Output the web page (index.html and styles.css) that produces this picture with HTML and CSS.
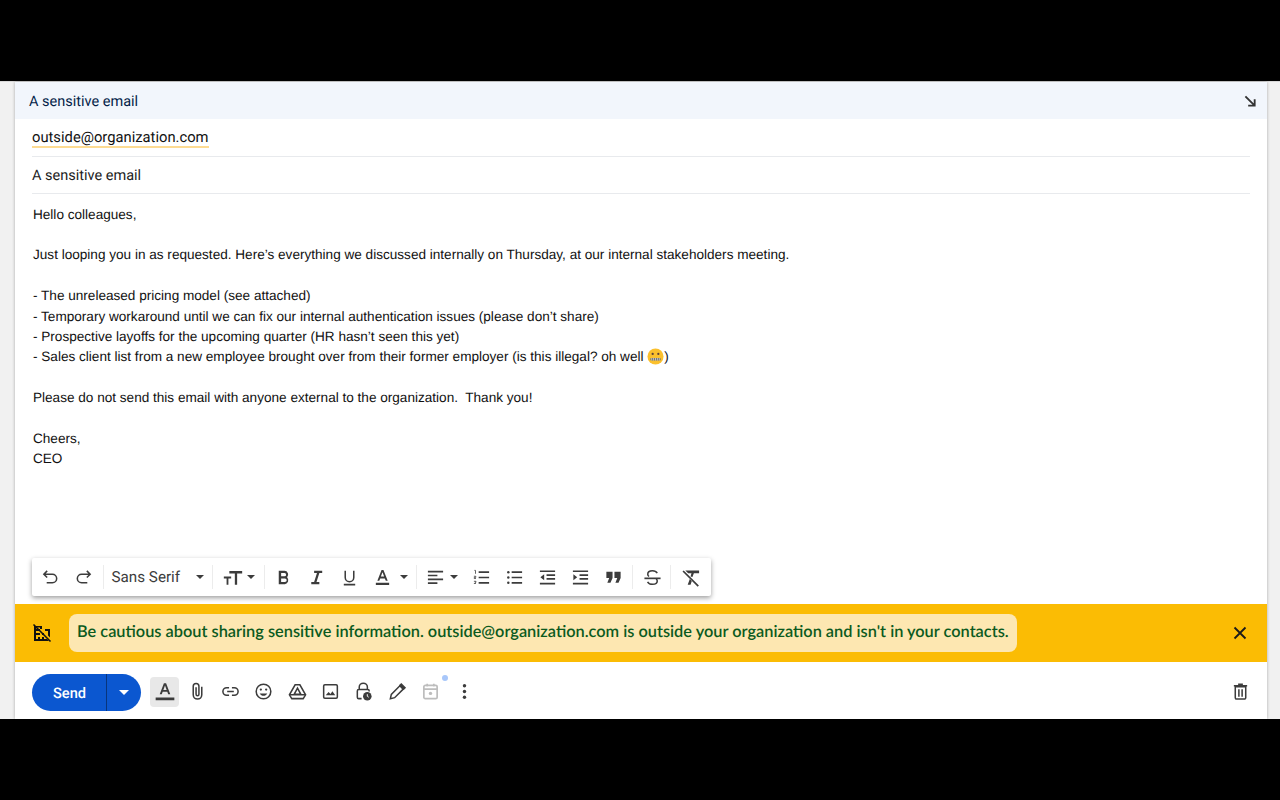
FILE: index.html
```html
<!DOCTYPE html>
<html lang="en">
<head>
<meta charset="utf-8">
<title>A sensitive email</title>
<link rel="stylesheet" href="styles.css">
</head>
<body>
<div class="bar-black"></div>
<main class="stage">
  <section class="compose">
    <header class="head">
      <span class="head-title">A sensitive email</span>
      <svg class="ic-exit" viewBox="0 0 14 14"><path d="M1.500 1.500 11 11M11.500 4.500v7h-7" fill="none" stroke="#333" stroke-width="2"/></svg>
    </header>
    <div class="field field-to"><span class="chip">outside@organization.com</span></div>
    <div class="field field-subject">A sensitive email</div>
    <div class="body">
      <p>Hello colleagues,</p>
      <p>Just looping you in as requested. Here’s everything we discussed internally on Thursday, at our internal stakeholders meeting.</p>
      <p>- The unreleased pricing model (see attached)<br>
      - Temporary workaround until we can fix our internal authentication issues (please don’t share)<br>
      - Prospective layoffs for the upcoming quarter (HR hasn’t seen this yet)<br>
      - Sales client list from a new employee brought over from their former employer (is this illegal? oh well <svg class="emoji" viewBox="0 0 18 18"><circle cx="9" cy="9" r="8.500" fill="#fbc02d"/><circle cx="6" cy="6.300" r="1.200" fill="#5d4037"/><circle cx="12" cy="6.300" r="1.200" fill="#5d4037"/><rect x="3.500" y="10.500" width="11" height="2.800" rx="1" fill="#6d6d6d"/><path d="M5 10.500v2.800M7 10.500v2.800M9 10.500v2.800M11 10.500v2.800M13 10.500v2.800" stroke="#ddd" stroke-width=".8"/></svg>)</p>
      <p>Please do not send this email with anyone external to the organization.&nbsp; Thank you!</p>
      <p>Cheers,<br>CEO</p>
    </div>
    <div class="format-wrap">
      <div class="format">
        <span class="fbtn w33"><svg viewBox="0 0 20 20"><path d="M6.500 3 3 6.500 6.500 10M3.500 6.500H12a4.500 4.500 0 0 1 0 9H6" class="st"/></svg></span>
        <span class="fbtn w33"><svg viewBox="0 0 20 20"><path d="M13.500 3 17 6.500 13.500 10M16.500 6.500H8a4.500 4.500 0 0 0 0 9h6" class="st"/></svg></span>
        <span class="sep s-a"></span>
        <span class="fontname">Sans Serif</span><span class="caret c-font"></span>
        <span class="sep s-b"></span>
        <span class="fbtn w-size"><svg viewBox="0 0 24 20"><path d="M2 9h8v2H7v7H5v-7H2zM8 3h14v2.500h-5.500V18H14V5.500H8z" class="fl"/></svg></span><span class="caret c-size"></span>
        <span class="sep s-c"></span>
        <span class="fbtn w33"><svg viewBox="0 0 20 20"><path d="M5 3h6a4 4 0 0 1 2.800 6.800A4.300 4.300 0 0 1 11.500 17H5zm2.500 2.300v3.500H11a1.750 1.750 0 0 0 0-3.500zm0 5.700v3.700H11.500a1.850 1.850 0 0 0 0-3.700z" class="fl" fill-rule="evenodd"/></svg></span>
        <span class="fbtn w33"><svg viewBox="0 0 20 20"><path d="M7.500 3H16v2.300h-3L10 14.700h3V17H4.500v-2.300h3l3-9.400h-3z" class="fl"/></svg></span>
        <span class="fbtn w33"><svg viewBox="0 0 20 20"><path d="M5.500 3v7a4.500 4.500 0 0 0 9 0V3M4 17.500h12" class="st"/></svg></span>
        <span class="fbtn w-color"><svg viewBox="0 0 20 20"><path d="M9 2h2l4.500 11.500h-2L12.400 11H7.600l-1 2.500h-2zm-.700 7h3.400L10 4.500zM3 15.500h14V18H3z" class="fl" fill-rule="evenodd"/></svg></span><span class="caret c-color"></span>
        <span class="sep s-d"></span>
        <span class="fbtn w-align"><svg viewBox="0 0 20 20"><path d="M2 3h16v1.800H2zM2 7h10v1.800H2zM2 11h16v1.800H2zM2 15h10v1.800H2z" class="fl"/></svg></span><span class="caret c-align"></span>
        <span class="fbtn w-ol"><svg viewBox="0 0 20 20"><path d="M7 3.500h11v1.800H7zM7 9.100h11v1.800H7zM7 14.700h11v1.800H7z" class="fl"/><path d="M2.500 2.500h1.200v3.600M2 8.700h2v1.200H2.400v1.200h1.800M2 14h2.200v1.100H3m-1 1.200h2.200" fill="none" stroke="#333" stroke-width=".8"/></svg></span>
        <span class="fbtn w33"><svg viewBox="0 0 20 20"><circle cx="3.500" cy="4.400" r="1.300" class="fl"/><circle cx="3.500" cy="10" r="1.300" class="fl"/><circle cx="3.500" cy="15.600" r="1.300" class="fl"/><path d="M7 3.500h11v1.800H7zM7 9.100h11v1.800H7zM7 14.700h11v1.800H7z" class="fl"/></svg></span>
        <span class="fbtn w33"><svg viewBox="0 0 20 20"><path d="M2 2.500h16v1.800H2zM9 6.500h9v1.800H9zM9 10.500h9v1.800H9zM2 15.500h16v1.800H2zM6.500 6.500v6.500L2.500 9.800z" class="fl"/></svg></span>
        <span class="fbtn w33"><svg viewBox="0 0 20 20"><path d="M2 2.500h16v1.800H2zM9 6.500h9v1.800H9zM9 10.500h9v1.800H9zM2 15.500h16v1.800H2zM2.500 6.500v6.500l4-3.200z" class="fl"/></svg></span>
        <span class="fbtn w-quote"><svg viewBox="0 0 20 20"><path d="M2.500 4h6.500v6.500L6.800 15.500H3.500l2-5H2.500zM11 4h6.500v6.500l-2.200 5h-3.300l2-5H11z" class="fl"/></svg></span>
        <span class="sep s-e"></span>
        <span class="fbtn w-strike"><svg viewBox="0 0 20 20"><path d="M15 5.500C14 3.800 12 3 10 3 7.300 3 5 4.300 5 6.500c0 1 .5 1.800 1.300 2.500M13.800 11.500c.8.600 1.200 1.300 1.200 2.200 0 2.200-2.300 3.500-5 3.500-2.300 0-4.200-1-5.200-2.700" class="st"/><path d="M1.500 10h17v1.800h-17z" class="fl"/></svg></span>
        <span class="sep s-f"></span>
        <span class="fbtn w-clear"><svg viewBox="0 0 20 20"><path d="M3.500 2.500H18v3h-5.500L11 9.500 9 9l1-3.500H6.500zM8.300 11.300 6 17.500h3l1.500-4.300zM1.800 2.500l16 16-1.300 1.300-16-16z" class="fl"/></svg></span>
      </div>
    </div>
    <div class="warn">
      <svg class="ic-domain" viewBox="0 0 20 20"><path d="M2 3V18h15l-2-2H4v-2h2v2h2v-2H6v-2h2V10H6V8h2V6H6V4.500h2V6h2V3zM4 4.500h2V6H4zM4 8h2v2H4zm0 4h2v2H4zM10 6h8v8.500l-2-2V8h-3V6zM10 10h2v2h-2zM10 14h2v2h-2z" fill="#111" fill-rule="evenodd"/><path d="M1.500 1.500 18.500 18.500" stroke="#111" stroke-width="1.600"/></svg>
      <div class="warn-pill">Be cautious about sharing sensitive information. outside@organization.com is outside your organization and isn't in your contacts.</div>
      <svg class="ic-close" viewBox="0 0 14 14"><path d="M1.500 1.500l11 11M12.500 1.500l-11 11" stroke="#1a1a1a" stroke-width="1.800" fill="none"/></svg>
    </div>
    <footer class="foot">
      <div class="send"><span class="send-main">Send</span><span class="send-more"><i class="caret-w"></i></span></div>
      <span class="tool tool-a"><svg viewBox="0 0 20 20"><path d="M9 2h2l3.800 10h-1.900l-.8-2.200H7.900L7.100 12H5.200zm-.5 6.200h3L10 4z" class="fl" fill-rule="evenodd"/><path d="M1.500 15h17v2.500h-17z" class="fl"/></svg></span>
      <span class="tool t-attach"><svg viewBox="0 0 20 20"><path d="M14.500 5.500V14a4.500 4.500 0 0 1-9 0V5a3 3 0 0 1 6 0v8.500a1.500 1.500 0 0 1-3 0V6" class="st" transform="translate(0 -.5)"/></svg></span>
      <span class="tool t-next"><svg viewBox="0 0 20 20"><path d="M8.500 6H6a4 4 0 0 0 0 8h2.500M11.500 6H14a4 4 0 0 1 0 8h-2.500M6.500 10h7" class="st"/></svg></span>
      <span class="tool t-next"><svg viewBox="0 0 20 20"><circle cx="10" cy="10" r="7.700" class="st"/><circle cx="7.200" cy="8" r="1.200" class="fl"/><circle cx="12.800" cy="8" r="1.200" class="fl"/><path d="M6 12c1 1.700 2.400 2.400 4 2.400s3-.7 4-2.400z" class="fl"/></svg></span>
      <span class="tool t-next"><svg viewBox="0 0 20 20"><path d="M7.500 3h5l6 10.500-2.500 4H4l-2.500-4z" class="st"/><path d="M10 6.500 6.500 13h7zM2 13.500h16" class="st"/></svg></span>
      <span class="tool t-next"><svg viewBox="0 0 20 20"><rect x="2.800" y="2.800" width="14.400" height="14.400" rx="1.300" class="st"/><path d="M5 14l3-3.500 2 2 2-2.800L15 14z" class="fl"/></svg></span>
      <span class="tool t-next"><svg viewBox="0 0 20 20"><path d="M5.500 8V5.500a4.300 4.300 0 0 1 8.600 0V8M8 17.500H5a1.500 1.500 0 0 1-1.500-1.500V9.500A1.500 1.500 0 0 1 5 8h9.500a1.500 1.500 0 0 1 1.500 1.500V10" class="st"/><circle cx="14" cy="15" r="4.500" class="fl"/><path d="M14 12.800V15l1.500 1" stroke="#fff" fill="none"/></svg></span>
      <span class="tool t-next"><svg viewBox="0 0 20 20"><path d="M2.500 17.500l1-4.500L12.500 4l3.500 3.500L7 16.500z" class="st"/><path d="M11.500 3.500l2.500-2.500 5 5-2.500 2.500z" class="fl"/></svg></span>
      <span class="tool t-next t-sched"><svg viewBox="0 0 20 20"><path d="M3 5a1.500 1.500 0 0 1 1.500-1.500h11A1.500 1.500 0 0 1 17 5v11a1.500 1.500 0 0 1-1.500 1.500h-11A1.500 1.500 0 0 1 3 16zM3 7.500h14M6.500 1.800v3M13.500 1.800v3" class="st-g"/><circle cx="10" cy="12" r="1.800" fill="#bdbdbd"/></svg><i class="dot"></i></span>
      <span class="tool t-next"><svg viewBox="0 0 20 20"><circle cx="10" cy="4" r="1.800" class="fl"/><circle cx="10" cy="10" r="1.800" class="fl"/><circle cx="10" cy="16" r="1.800" class="fl"/></svg></span>
      <span class="tool t-trash"><svg viewBox="0 0 20 20"><path d="M4.500 5h11v11.500A1.500 1.500 0 0 1 14 18H6a1.500 1.500 0 0 1-1.500-1.500zM3 4h14M7.500 2.500h5M8.300 7.500v8M11.700 7.500v8" class="st"/></svg></span>
    </footer>
  </section>
</main>
<div class="bar-black"></div>
</body>
</html>
```
FILE: styles.css
```css
* { box-sizing: border-box; }
html, body { margin: 0; height: 800px; overflow: hidden; background: #000; text-rendering: geometricPrecision; }
.bar-black { height: 81px; background: #000; }
.stage { height: 638px; background: #f1f1f1; padding: 0 13px 0 15px; border-top: 1px solid #d8d8d8; }
.compose { height: 100%; background: #fff; display: flex; flex-direction: column; box-shadow: 0 0 3px rgba(0,0,0,.3); font-family: Roboto, sans-serif; color: #1f1f1f; }
.head { height: 37px; flex: none; background: #f2f6fc; display: flex; align-items: center; justify-content: space-between; padding: 1px 10px 0 14px; }
.head-title { font-size: 14.5px; color: #041e49; }
.ic-exit { width: 13px; height: 13px; }
.field { flex: none; margin: 0 17px; border-bottom: 1px solid #e8eaed; font-size: 14.5px; display: flex; align-items: center; }
.field-to { height: 38px; padding-top: 1px; }
.chip { border-bottom: 2px solid #fddb92; line-height: 18px; height: 20px; font-size: 14.75px; color: #111; }
.field-subject { height: 37px; color: #222; }
.body { flex: 1; padding: 10.500px 18px 0; font: 13.58px/20.4px "Liberation Sans", Arial, sans-serif; color: #111; }
.body p { margin: 0 0 20.4px; }
.emoji { width: 17px; height: 17px; vertical-align: -4px; }
.format-wrap { flex: none; padding: 0 17px 8px; }
.format { width: 679px; height: 38px; background: #fff; box-shadow: 0 2px 5px rgba(0,0,0,.38); border-radius: 2px; display: flex; align-items: center; padding-left: 2px; }
.fbtn { flex: none; display: flex; align-items: center; justify-content: center; height: 38px; }
.fbtn svg { width: 19px; height: 19px; }
.w33 { width: 33.3px; }
.st { fill: none; stroke: #3c3c3c; stroke-width: 1.6; }
.st-g { fill: none; stroke: #bdbdbd; stroke-width: 1.8; }
.fl { fill: #3c3c3c; }
.sep { flex: none; width: 1px; height: 24px; background: #ececec; }
.s-a { margin: 0 8px 0 2px; }
.fontname { flex: none; width: 84px; font-size: 15.2px; color: #3c3c3c; }
.caret { flex: none; width: 0; height: 0; border-left: 4.5px solid transparent; border-right: 4.5px solid transparent; border-top: 4.5px solid #3c3c3c; }
.c-font { margin-right: 8px; }
.s-b { margin-right: 8px; }
.w-size { width: 24px; }
.w-size svg { width: 22px; height: 19px; }
.c-size { margin-left: 2px; margin-right: 9px; }
.s-c { margin-right: 2px; }
.w-color { width: 33px; }
.c-color { margin-left: 1px; margin-right: 8px; }
.s-d { margin-right: 8px; }
.w-align { width: 20px; }
.c-align { margin-left: 5px; }
.w-ol { width: 20px; margin-left: 13px; margin-right: 6px; }
.w-quote { width: 33px; }
.s-e { margin-left: 2px; margin-right: 9px; }
.w-strike { width: 20px; }
.s-f { margin-left: 8px; margin-right: 10px; }
.w-clear { width: 20px; }
.warn { flex: none; height: 58px; background: #fbbc04; display: flex; align-items: center; padding: 0 18px 0 17px; }
.ic-domain { flex: none; width: 20px; height: 20px; margin-right: 17px; }
.warn-pill { flex: none; width: 948px; height: 38px; padding: 0 0 3px 8px; background: #fde7b1; border-radius: 8px; display: flex; align-items: center; font: 600 16.35px "Lato", sans-serif; color: #0b5a1e; white-space: nowrap; }
.ic-close { flex: none; width: 14px; height: 14px; margin-left: auto; margin-right: 2px; }
.foot { flex: none; height: 57px; display: flex; align-items: center; padding: 2px 0 0 17px; }
.send { flex: none; display: flex; height: 37px; width: 109px; border-radius: 18.5px; background: #0b57d0; color: #fff; overflow: hidden; margin: 2px 9px 0 0; }
.send-main { width: 75px; display: flex; align-items: center; justify-content: center; font-size: 14.6px; font-weight: 500; border-right: 1px solid #08357d; padding-left: 1px; }
.send-more { flex: 1; display: flex; align-items: center; justify-content: center; }
.caret-w { width: 0; height: 0; border-left: 5px solid transparent; border-right: 5px solid transparent; border-top: 5px solid #fff; }
.tool { flex: none; width: 20px; height: 30px; position: relative; display: flex; align-items: center; justify-content: center; }
.tool svg { width: 19px; height: 19px; }
.tool-a { width: 29px; background: #e8e8e8; border-radius: 4px; }
.tool-a svg { width: 22px; height: 22px; }
.t-attach { margin-left: 8px; }
.t-next { margin-left: 13.4px; }
.t-trash { margin-left: auto; margin-right: 17px; }
.dot { position: absolute; top: -2px; right: -7px; width: 6px; height: 6px; border-radius: 50%; background: #a8c7fa; }
```
